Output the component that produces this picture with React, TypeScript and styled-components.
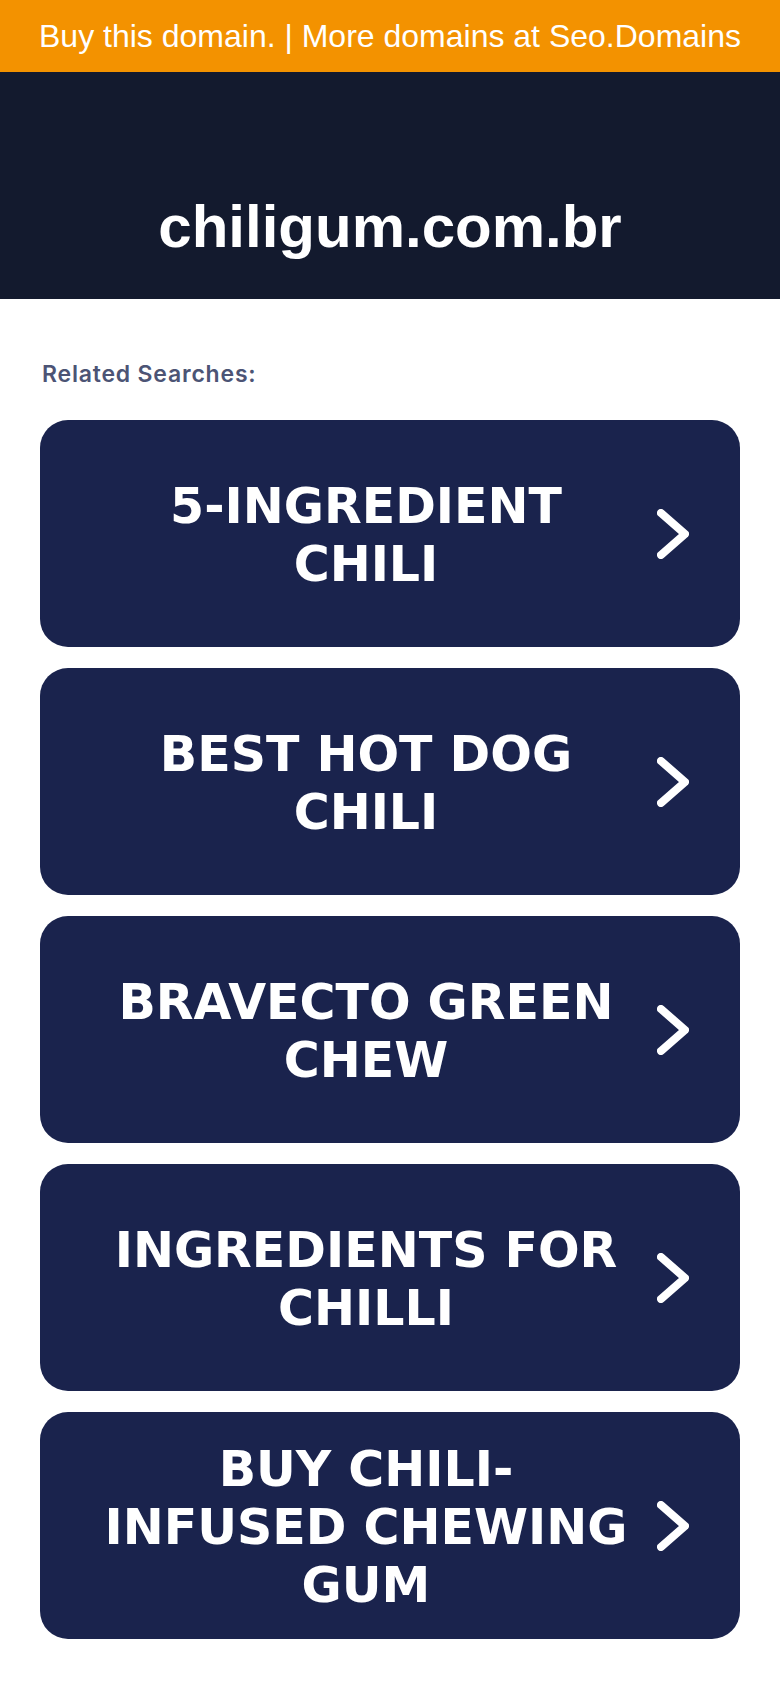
import React from "react";
import styled, { createGlobalStyle } from "styled-components";

const GlobalStyle = createGlobalStyle`
  html, body {
    margin: 0;
    padding: 0;
    background: #ffffff;
  }
  * { box-sizing: border-box; }
`;

const Page = styled.div`
  width: 100%;
  min-height: 1688px;
  background: #ffffff;
  display: flex;
  flex-direction: column;
`;

const Banner = styled.a`
  height: 72px;
  background: #f39200;
  color: #ffffff;
  display: flex;
  align-items: center;
  justify-content: center;
  font-family: "Liberation Sans", Arial, sans-serif;
  font-size: 32px;
  text-decoration: none;
  white-space: nowrap;
`;

const Header = styled.header`
  background: #131a2e;
  padding: 120px 20px 38px;
  display: flex;
  justify-content: center;
`;

const Title = styled.h1`
  margin: 0;
  color: #ffffff;
  font-family: "Liberation Sans", Arial, sans-serif;
  font-weight: 700;
  font-size: 60px;
  line-height: 69px;
`;

const Main = styled.main`
  padding: 61px 40px 0;
  display: flex;
  flex-direction: column;
`;

const Label = styled.div`
  font-family: Inter, "Open Sans", sans-serif;
  font-weight: 600;
  font-size: 23px;
  line-height: 28px;
  letter-spacing: 0.8px;
  color: #4c5475;
  margin-bottom: 32px;
  padding-left: 2px;
`;

const List = styled.div`
  display: flex;
  flex-direction: column;
  gap: 21px;
`;

const Card = styled.a`
  height: 227px;
  background: #1a234d;
  border-radius: 28px;
  display: flex;
  align-items: center;
  gap: 26px;
  padding: 0 51px 0 61px;
  text-decoration: none;
  color: #ffffff;
`;

const CardText = styled.span`
  flex: 1;
  text-align: center;
  font-family: "DejaVu Sans", Verdana, sans-serif;
  font-weight: 700;
  font-size: 49px;
  line-height: 58px;
  padding-top: 4px;
  text-transform: uppercase;
`;

const Chevron = styled.svg`
  width: 32px;
  height: 50px;
  flex: none;
`;

const items = [
  "5-Ingredient Chili",
  "Best Hot Dog Chili",
  "Bravecto Green Chew",
  "Ingredients for Chilli",
  "Buy Chili-Infused Chewing Gum",
];

export default function App() {
  return (
    <>
      <GlobalStyle />
      <Page>
        <Banner href="#">Buy this domain. | More domains at Seo.Domains</Banner>
        <Header>
          <Title>chiligum.com.br</Title>
        </Header>
        <Main>
          <Label>Related Searches:</Label>
          <List>
            {items.map((t) => (
              <Card href="#" key={t}>
                <CardText>{t}</CardText>
                <Chevron viewBox="0 0 32 50" aria-hidden="true">
                  <polyline
                    points="4,4 28,25 4,46"
                    fill="none"
                    stroke="#ffffff"
                    strokeWidth="8"
                    strokeLinecap="round"
                    strokeLinejoin="round"
                  />
                </Chevron>
              </Card>
            ))}
          </List>
        </Main>
      </Page>
    </>
  );
}
